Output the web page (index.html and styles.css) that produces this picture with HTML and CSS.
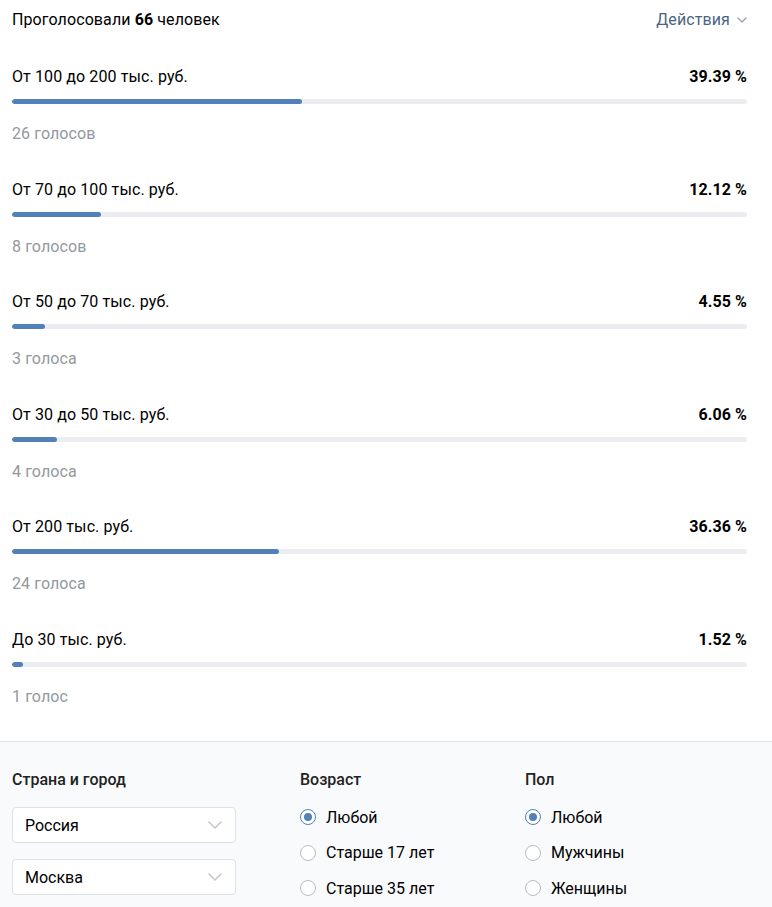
FILE: index.html
```html
<!DOCTYPE html>
<html lang="ru">
<head>
<meta charset="utf-8">
<link rel="stylesheet" href="styles.css">
</head>
<body>
<div class="poll">
  <div class="head">
    <div class="total">Проголосовали <b>66</b> человек</div>
    <div class="actions">Действия
      <svg class="chev-s" width="10" height="6" viewBox="0 0 10 6"><path d="M1 1l4 4 4-4" fill="none" stroke="#99a2ad" stroke-width="1.4" stroke-linecap="round" stroke-linejoin="round"/></svg>
    </div>
  </div>

  <div class="option">
    <div class="line"><span>От 100 до 200 тыс. руб.</span><b>39.39 %</b></div>
    <div class="track"><div class="fill" style="width:39.39%"></div></div>
    <div class="votes">26 голосов</div>
  </div>
  <div class="option">
    <div class="line"><span>От 70 до 100 тыс. руб.</span><b>12.12 %</b></div>
    <div class="track"><div class="fill" style="width:12.12%"></div></div>
    <div class="votes">8 голосов</div>
  </div>
  <div class="option">
    <div class="line"><span>От 50 до 70 тыс. руб.</span><b>4.55 %</b></div>
    <div class="track"><div class="fill" style="width:4.55%"></div></div>
    <div class="votes">3 голоса</div>
  </div>
  <div class="option">
    <div class="line"><span>От 30 до 50 тыс. руб.</span><b>6.06 %</b></div>
    <div class="track"><div class="fill" style="width:6.06%"></div></div>
    <div class="votes">4 голоса</div>
  </div>
  <div class="option">
    <div class="line"><span>От 200 тыс. руб.</span><b>36.36 %</b></div>
    <div class="track"><div class="fill" style="width:36.36%"></div></div>
    <div class="votes">24 голоса</div>
  </div>
  <div class="option">
    <div class="line"><span>До 30 тыс. руб.</span><b>1.52 %</b></div>
    <div class="track"><div class="fill" style="width:1.52%"></div></div>
    <div class="votes">1 голос</div>
  </div>
</div>

<div class="filters">
  <div class="col col-geo">
    <div class="ftitle">Страна и город</div>
    <div class="select"><span>Россия</span>
      <svg width="16" height="10" viewBox="0 0 16 10"><path d="M2 2l6 6 6-6" fill="none" stroke="#c4c8cc" stroke-width="1.6" stroke-linecap="round" stroke-linejoin="round"/></svg>
    </div>
    <div class="select"><span>Москва</span>
      <svg width="16" height="10" viewBox="0 0 16 10"><path d="M2 2l6 6 6-6" fill="none" stroke="#c4c8cc" stroke-width="1.6" stroke-linecap="round" stroke-linejoin="round"/></svg>
    </div>
  </div>
  <div class="col col-age">
    <div class="ftitle">Возраст</div>
    <div class="radio on"><i></i>Любой</div>
    <div class="radio"><i></i>Старше 17 лет</div>
    <div class="radio"><i></i>Старше 35 лет</div>
  </div>
  <div class="col col-sex">
    <div class="ftitle">Пол</div>
    <div class="radio on"><i></i>Любой</div>
    <div class="radio"><i></i>Мужчины</div>
    <div class="radio"><i></i>Женщины</div>
  </div>
</div>
</body>
</html>
```
FILE: styles.css
```css
html, body {
  margin: 0;
  padding: 0;
  background: #fff;
}
body {
  font-family: Roboto, "Noto Sans", "Liberation Sans", sans-serif;
  font-size: 16px;
  color: #000;
  width: 772px;
  height: 907px;
  overflow: hidden;
  position: relative;
}
.poll {
  padding: 10px 25px 0 12px;
}
.head {
  display: flex;
  justify-content: space-between;
  align-items: center;
  line-height: 20px;
  margin-bottom: 36px;
  letter-spacing: 0.1px;
}
.head b { font-weight: 700; }
.actions {
  color: #4a6583;
  display: flex;
  align-items: center;
  gap: 7px;
}
.option {
  height: 112.5px;
}
.line {
  display: flex;
  justify-content: space-between;
  line-height: 20px;
  padding-top: 1px;
  letter-spacing: 0.1px;
}
.line b { font-weight: 700; }
.track {
  margin-top: 12px;
  height: 5px;
  border-radius: 3px;
  background: #ebedf0;
  overflow: hidden;
}
.fill {
  height: 100%;
  background: #5181b8;
  border-radius: 3px;
}
.votes {
  margin-top: 20px;
  line-height: 20px;
  color: #93989e;
  letter-spacing: 0.1px;
}
.filters {
  border-top: 1px solid #e1e3e6;
  background: #f9fafb;
  height: 200px;
  display: flex;
  padding: 28px 0 0 12px;
  box-sizing: border-box;
  position: absolute;
  top: 741px;
  left: 0;
  width: 772px;
}
.col-geo { width: 224px; margin-right: 64px; }
.col-age { width: 225px; }
.ftitle {
  font-weight: 500;
  color: #222;
  line-height: 20px;
  margin-bottom: 17px;
}
.select {
  height: 36px;
  box-sizing: border-box;
  border: 1px solid #dce1e6;
  border-radius: 4px;
  background: #fff;
  display: flex;
  align-items: center;
  justify-content: space-between;
  padding: 0 12px 0 12px;
  margin-bottom: 16px;
  color: #000;
}
.radio {
  display: flex;
  align-items: center;
  height: 20px;
  margin-bottom: 15.5px;
  color: #000;
}
.radio i {
  width: 14px;
  height: 14px;
  border: 1px solid #b8bdc2;
  border-radius: 50%;
  background: #fff;
  margin-right: 10px;
  box-sizing: content-box;
  position: relative;
}
.radio.on i {
  border-color: #5181b8;
}
.radio.on i::after {
  content: "";
  position: absolute;
  left: 3px;
  top: 3px;
  width: 8px;
  height: 8px;
  border-radius: 50%;
  background: #5181b8;
}
```
